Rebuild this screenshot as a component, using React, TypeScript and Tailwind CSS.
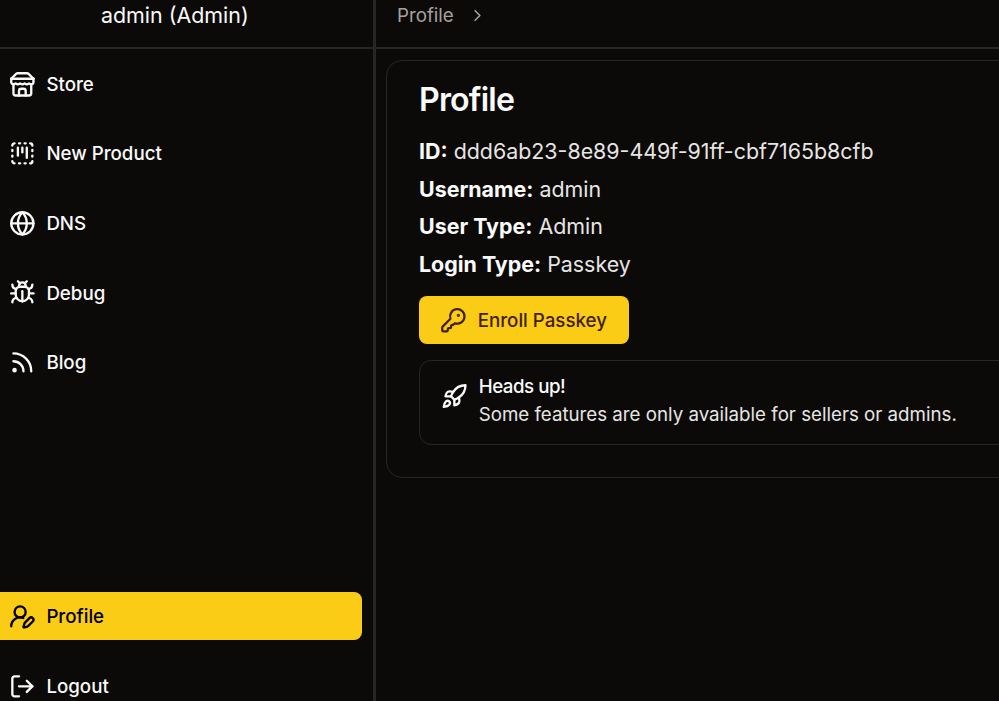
import { SquareDashedKanban, Globe, Bug, Rss, UserRoundPen, LogOut, ChevronRight, KeyRound, Rocket } from "lucide-react";
import type { ReactNode } from "react";

function StoreIcon() {
  return (
    <svg className="size-[26.7px] shrink-0" viewBox="0 0 24 24" fill="none" stroke="currentColor" strokeWidth="2.1" strokeLinecap="round" strokeLinejoin="round">
      <path d="m2 7 4.41-4.41A2 2 0 0 1 7.83 2h8.34a2 2 0 0 1 1.42.59L22 7" />
      <path d="M4 12v8a2 2 0 0 0 2 2h12a2 2 0 0 0 2-2v-8" />
      <path d="M15 22v-4a2 2 0 0 0-2-2h-2a2 2 0 0 0-2 2v4" />
      <path d="M2 7h20" />
      <path d="M22 7v3a2 2 0 0 1-2 2a2.7 2.7 0 0 1-1.59-.63.7.7 0 0 0-.82 0A2.7 2.7 0 0 1 16 12a2.7 2.7 0 0 1-1.59-.63.7.7 0 0 0-.82 0A2.7 2.7 0 0 1 12 12a2.7 2.7 0 0 1-1.59-.63.7.7 0 0 0-.82 0A2.7 2.7 0 0 1 8 12a2.7 2.7 0 0 1-1.59-.63.7.7 0 0 0-.82 0A2.7 2.7 0 0 1 4 12a2 2 0 0 1-2-2V7" />
    </svg>
  );
}

function NavItem({ icon, label, active = false }: { icon: ReactNode; label: string; active?: boolean }) {
  return (
    <a className={`flex h-[48.2px] w-[362px] items-center gap-[10.7px] rounded-r-lg pl-[9px] text-[18.72px] font-medium ${active ? "bg-[#facc15] text-black" : ""}`}>
      {icon}
      <span className="pt-[1.6px]">{label}</span>
    </a>
  );
}

function Detail({ name, value }: { name: string; value: string }) {
  return (
    <p className="h-[37.5px] text-[21.4px] leading-[37.5px] text-[#e7e5e4]">
      <span className="font-bold text-[#fafaf9]">{name}:</span> {value}
    </p>
  );
}

export default function App() {
  return (
    <div className="flex h-[701px] w-[999px] overflow-hidden bg-[#0c0a09] font-['Inter',sans-serif] text-[#fafaf9]">
      <aside className="flex w-[376px] shrink-0 flex-col border-r-3 border-[#292524]">
        <header className="h-[49px] shrink-0 border-b-2 border-[#292524] pl-[101px] text-[21.4px] leading-[31px]">admin (Admin)</header>
        <nav className="flex flex-col gap-[21.4px] pt-[11px]">
          <NavItem icon={<StoreIcon />} label="Store" />
          <NavItem icon={<SquareDashedKanban size={26.7} strokeWidth={2.1} />} label="New Product" />
          <NavItem icon={<Globe size={26.7} strokeWidth={2.1} />} label="DNS" />
          <NavItem icon={<Bug size={26.7} strokeWidth={2.1} />} label="Debug" />
          <NavItem icon={<Rss size={26.7} strokeWidth={2.1} />} label="Blog" />
        </nav>
        <nav className="mt-[205.8px] flex flex-col gap-[21.4px]">
          <NavItem icon={<UserRoundPen size={26.7} strokeWidth={2.1} />} label="Profile" active />
          <NavItem icon={<LogOut size={26.7} strokeWidth={2.1} />} label="Logout" />
        </nav>
      </aside>
      <main className="min-w-0 flex-1">
        <header className="flex h-[49px] border-b-2 border-[#292524] pl-[21px] text-[18.72px] leading-[31px] text-[#a8a29e]">
          Profile
          <ChevronRight size={19} className="mt-[6px] ml-[14px]" />
        </header>
        <section className="mt-[11px] ml-[10px] h-[418px] w-[800px] rounded-2xl border border-[#292524] pl-8">
          <h1 className="mt-[15px] h-12 text-[32.1px] leading-12 font-semibold tracking-[-0.8px]">Profile</h1>
          <div className="mt-[9.4px]">
            <Detail name="ID" value="ddd6ab23-8e89-449f-91ff-cbf7165b8cfb" />
            <Detail name="Username" value="admin" />
            <Detail name="User Type" value="Admin" />
            <Detail name="Login Type" value="Passkey" />
          </div>
          <button className="mt-[12.6px] flex h-12 w-[210px] items-center gap-[11px] rounded-lg bg-[#facc15] pl-[21px] text-[18.72px] font-medium text-[#422006]">
            <KeyRound size={26.7} />
            <span className="pt-[1.6px]">Enroll Passkey</span>
          </button>
          <div className="mt-4 flex h-[85px] rounded-xl border border-[#292524] pt-3 pl-[21px]">
            <Rocket size={26.7} strokeWidth={2.1} className="mt-[10px] shrink-0" />
            <div className="ml-[11px] text-[18.72px] leading-7">
              <h2 className="font-medium tracking-[-0.47px]">Heads up!</h2>
              <p className="text-[#e7e5e4]">Some features are only available for sellers or admins.</p>
            </div>
          </div>
        </section>
      </main>
    </div>
  );
}
